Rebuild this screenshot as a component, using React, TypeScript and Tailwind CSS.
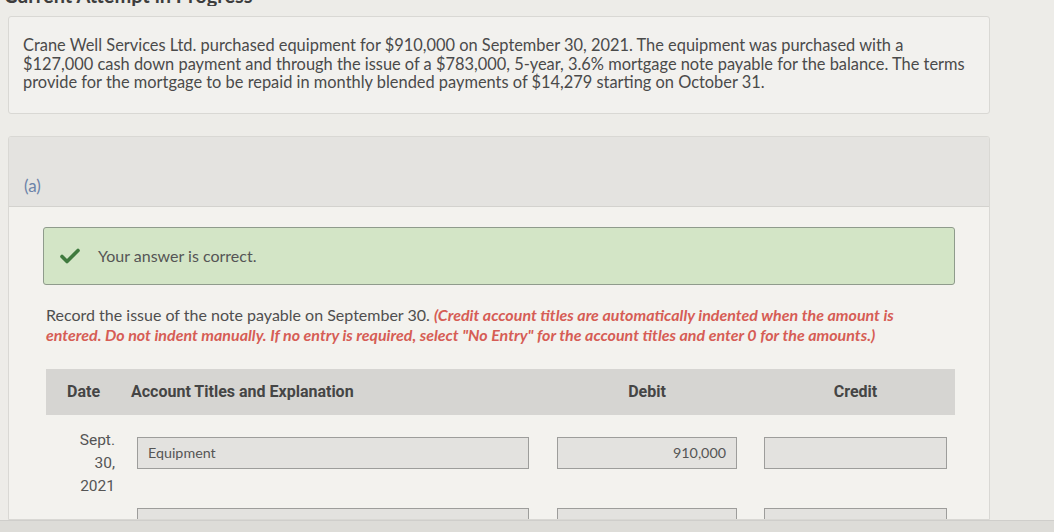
import React from 'react';

const lato = { fontFamily: 'Lato, "Open Sans", sans-serif' };
const roboto = { fontFamily: 'Roboto, "Liberation Sans", sans-serif' };

function Field({ value, className }: { value?: string; className: string }) {
  return (
    <div
      className={`h-[32px] border border-[#9d9d9b] bg-[#e3e2df] flex items-center text-[14.3px] text-[#555] ${className}`}
    >
      {value}
    </div>
  );
}

export default function App() {
  return (
    <div className="w-[1054px] h-[532px] overflow-hidden bg-[#edece8] flex flex-col" style={lato}>
      {/* cut-off attempt heading */}
      <div className="h-[6px] overflow-hidden pl-[4px]">
        <div className="mt-[-15px] text-[20px] leading-[20px] font-bold text-[#3d3d3d]">
          Current Attempt in Progress
        </div>
      </div>

      {/* question text */}
      <div className="mt-[10px] ml-[8px] w-[982px] bg-[#f2f1ee] border border-[#d9d8d4] rounded-[3px] pl-[14px] pt-[19px] pb-[21px] text-[16.4px] leading-[18.5px] text-[#4a4a4a] whitespace-nowrap">
        Crane Well Services Ltd. purchased equipment for $910,000 on September 30, 2021. The equipment was purchased with a
        <br />
        $127,000 cash down payment and through the issue of a $783,000, 5-year, 3.6% mortgage note payable for the balance. The terms
        <br />
        provide for the mortgage to be repaid in monthly blended payments of $14,279 starting on October 31.
      </div>

      {/* part (a) */}
      <div className="mt-[22px] ml-[8px] w-[982px] flex-1 min-h-0 overflow-hidden border border-[#d9d8d4] rounded-t-[3px] flex flex-col">
        <div className="h-[70px] shrink-0 bg-[#e4e3e0] border-b border-[#d3d2ce] pl-[15px] pt-[36px] text-[17px] text-[#6b82a8]">
          (a)
        </div>

        <div className="flex-1 bg-[#f3f2ee] px-[34px] pt-[20px]">
          <div className="h-[58px] bg-[#d3e5c6] border border-[#8f9b8c] rounded-[3px] flex items-center pl-[16px] gap-[18px]">
            <svg width="20" height="16" viewBox="0 0 20 16" className="shrink-0">
              <path d="M2 8.5 L7 13.5 L18 2.5" fill="none" stroke="#3f7a3e" strokeWidth="3.6" strokeLinecap="round" strokeLinejoin="round" />
            </svg>
            <span className="text-[16px] text-[#555]">Your answer is correct.</span>
          </div>

          <div className="mt-[20px] pl-[3px] text-[16px] leading-[20px] whitespace-nowrap text-[#4f4f4f]">
            Record the issue of the note payable on September 30.{' '}
            <span className="italic font-bold text-[#d65d55]">
              (Credit account titles are automatically indented when the amount is
              <br />
              entered. Do not indent manually. If no entry is required, select "No Entry" for the account titles and enter 0 for the amounts.)
            </span>
          </div>

          {/* table header */}
          <div
            className="mt-[24px] ml-[3px] h-[46px] bg-[#d6d5d2] flex items-center text-[16px] font-bold text-[#454545]"
            style={roboto}
          >
            <div className="w-[85px] pl-[21px]">Date</div>
            <div className="w-[426px]">Account Titles and Explanation</div>
            <div className="w-[180px] text-center">Debit</div>
            <div className="w-[27px]" />
            <div className="w-[183px] text-center">Credit</div>
          </div>

          {/* entry row */}
          <div className="mt-[22px] flex items-start">
            <div className="w-[82px] pr-[10px] text-right text-[15.5px] leading-[23px] text-[#555] mt-[-8px]" style={roboto}>
              Sept.
              <br />
              30,
              <br />
              2021
            </div>
            <Field value="Equipment" className="ml-[12px] w-[392px] pl-[10px]" />
            <Field value="910,000" className="ml-[28px] w-[180px] justify-end pr-[10px]" />
            <Field className="ml-[27px] w-[183px]" />
          </div>

          <div className="mt-[10px] flex items-start">
            <Field className="ml-[94px] w-[392px]" />
            <Field className="ml-[28px] w-[180px]" />
            <Field className="ml-[27px] w-[183px]" />
          </div>
        </div>
      </div>

      {/* footer bar */}
      <div className="h-[12px] shrink-0 bg-[#dddcd8] border-t border-[#cfcecb]" />
    </div>
  );
}
